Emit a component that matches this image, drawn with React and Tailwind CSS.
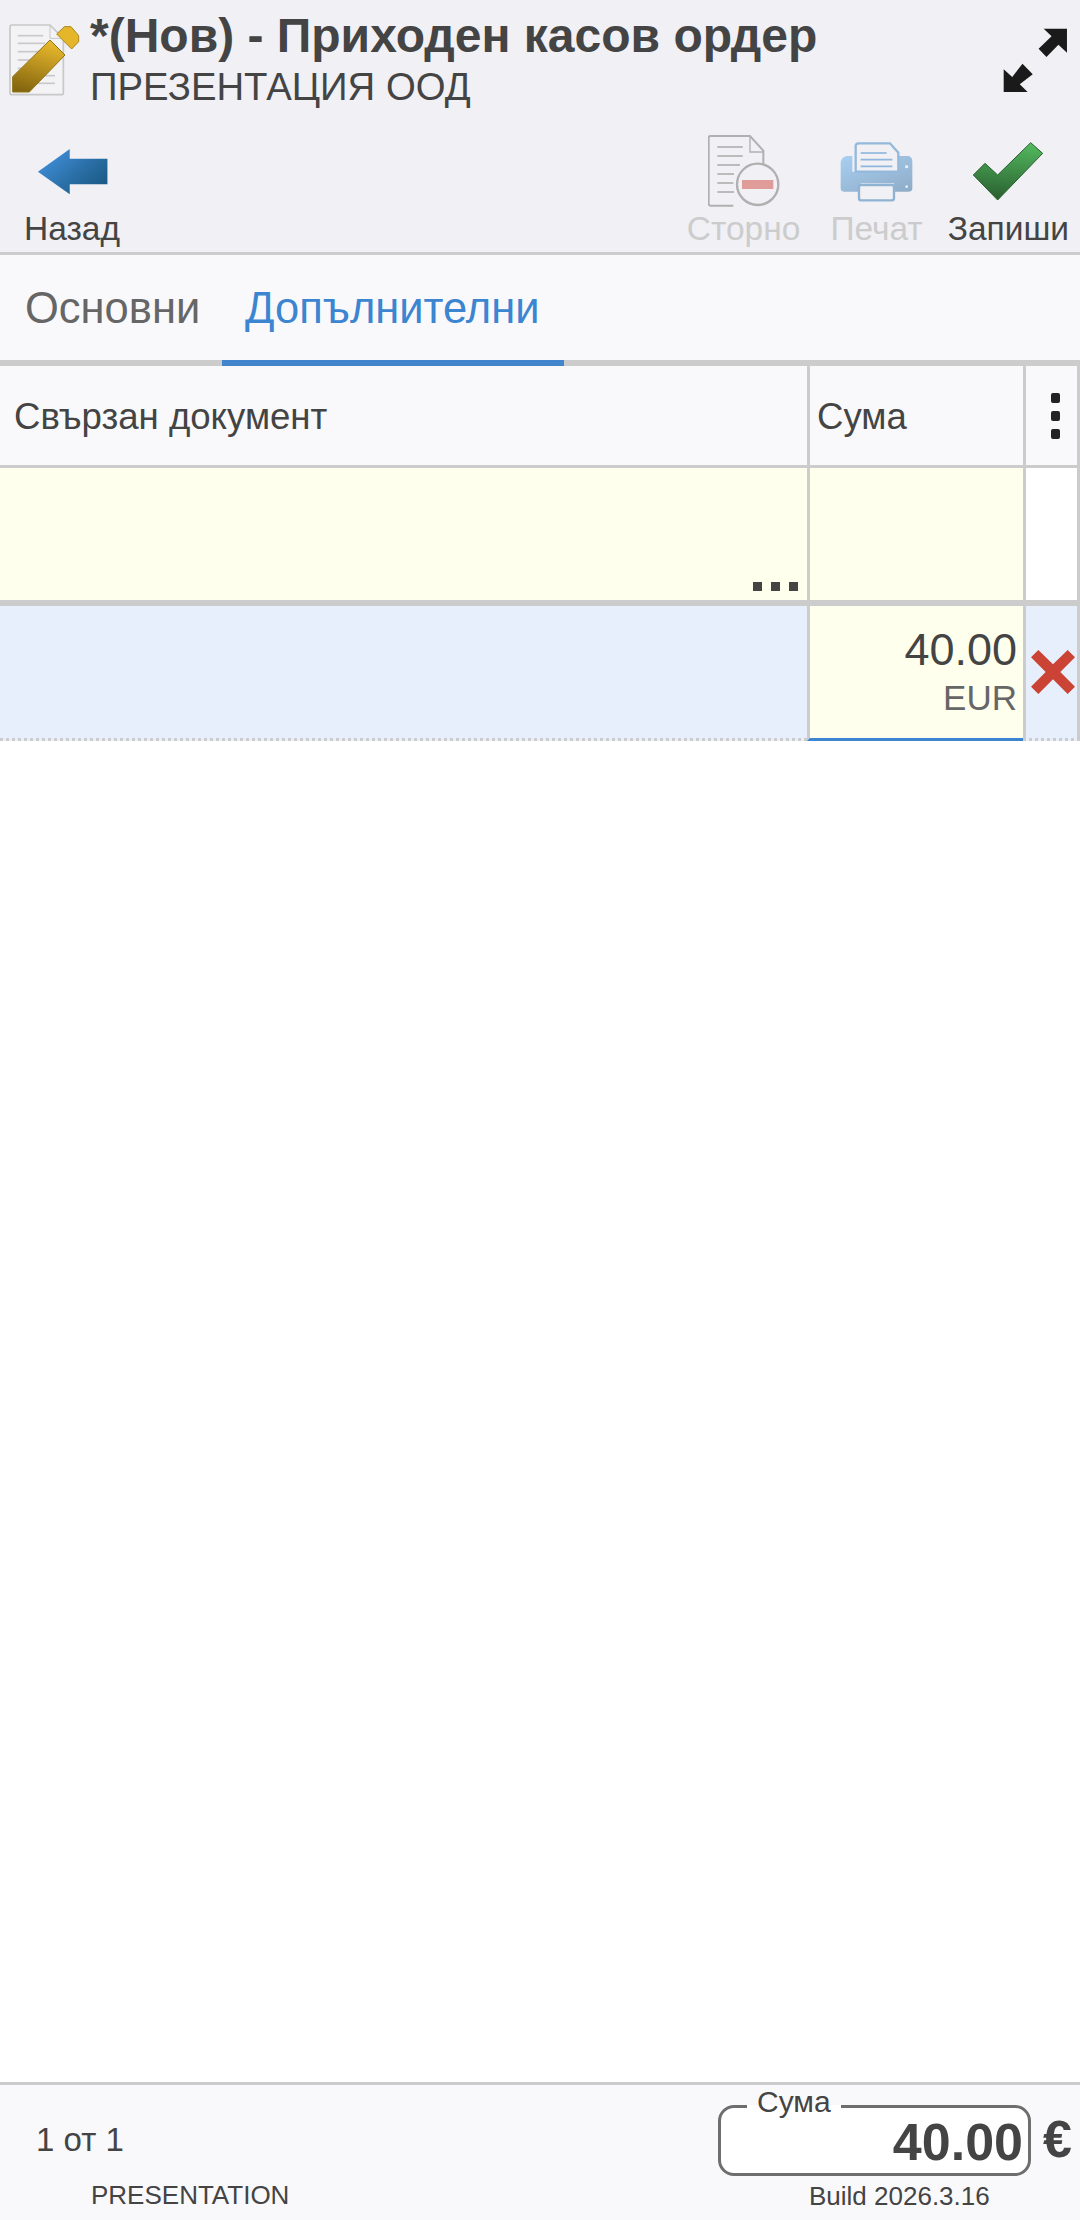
import React from "react";

const font = { fontFamily: '"Liberation Sans", Arial, sans-serif' };

function DocPencil() {
  return (
    <svg width="72" height="72" viewBox="27 72 216 216" className="shrink-0">
      <defs>
        <linearGradient id="pen" x1="0.6" y1="0" x2="0.3" y2="1">
          <stop offset="0" stopColor="#e9b92c" />
          <stop offset="1" stopColor="#85660f" />
        </linearGradient>
      </defs>
      <path d="M36 75 H150 L190 115 V278 Q190 284 184 284 H36 Q30 284 30 278 V81 Q30 75 36 75Z" fill="#f3f3f6" stroke="#c8c8c8" strokeWidth="5" />
      <path d="M150 75 V115 H190" fill="none" stroke="#c8c8c8" strokeWidth="3" />
      <g stroke="#c9c9c9" strokeWidth="5">
        <path d="M53 107 H130" /><path d="M53 130 H135" /><path d="M53 155 H135" /><path d="M53 180 H120" /><path d="M53 205 H100" /><path d="M110 227 H165" /><path d="M90 250 H165" />
      </g>
      <path d="M38 230 L150 120 L195 165 L88 276 H38Z" fill="url(#pen)" stroke="#8f7416" strokeWidth="3" />
      <path d="M170 102 L193 80 H213 L236 107 V125 L215 147Z" fill="#e5b52a" stroke="#a9871c" strokeWidth="3" />
    </svg>
  );
}

function Expand() {
  return (
    <svg width="65" height="65" viewBox="1343 83 190 195" preserveAspectRatio="none" className="shrink-0">
      <path d="M1462 85 H1530 V157 L1505 133 L1470 170 L1447 145 L1485 108Z" fill="#1a1a1a" />
      <path d="M1345 275 V207 L1370 230 L1400 190 L1430 222 L1392 252 L1415 275Z" fill="#1a1a1a" />
    </svg>
  );
}

function BackIcon() {
  return (
    <svg width="83" height="72" viewBox="90 405 240 216" preserveAspectRatio="none">
      <defs>
        <linearGradient id="back" x1="0.1" y1="0.2" x2="0.9" y2="0.8">
          <stop offset="0" stopColor="#3f8dd8" />
          <stop offset="0.55" stopColor="#2b70a8" />
          <stop offset="1" stopColor="#1b5c88" />
        </linearGradient>
      </defs>
      <path d="M110 515 L202 447 V476 H311 V553 H202 V583Z" fill="url(#back)" />
    </svg>
  );
}

function StornoIcon() {
  return (
    <svg width="72" height="72" viewBox="84 45 216 216">
      <path d="M92 48 H210 L250 92 V135 M160 257 H92 Q86 257 86 251 V54 Q86 48 92 48" fill="none" stroke="#b0b0b0" strokeWidth="6" />
      <path d="M210 48 V96 H250" fill="none" stroke="#b0b0b0" strokeWidth="4" />
      <g stroke="#b0b0b0" strokeWidth="5">
        <path d="M112 81 H188" /><path d="M112 108 H188" /><path d="M112 135 H180" /><path d="M112 162 H162" /><path d="M112 189 H160" /><path d="M112 216 H162" />
      </g>
      <circle cx="233" cy="193" r="62" fill="#f0f0f5" stroke="#b0b0b0" strokeWidth="7" />
      <rect x="186" y="180" width="94" height="27" fill="#e09c99" />
    </svg>
  );
}

function PrintIcon() {
  return (
    <svg width="74" height="72" viewBox="478 45 222 216">
      <defs>
        <linearGradient id="prn" x1="0.1" y1="0" x2="0.9" y2="1">
          <stop offset="0" stopColor="#a7cdf0" />
          <stop offset="1" stopColor="#8fadc8" />
        </linearGradient>
      </defs>
      <path d="M498 108 H515 V155 H655 V108 H680 Q695 108 695 125 V205 Q695 215 685 215 H640 V190 H540 V215 H490 Q480 215 480 205 V130 Q480 112 498 108Z" fill="url(#prn)" />
      <path d="M525 155 V78 Q525 70 533 70 H628 L653 98 V155Z" fill="#f0f0f5" stroke="#94b9da" strokeWidth="7" />
      <g stroke="#8fb6dc" strokeWidth="5">
        <path d="M540 99 H618" /><path d="M540 119 H635" /><path d="M540 139 H635" />
      </g>
      <rect x="535" y="195" width="105" height="46" rx="6" fill="#f0f0f5" stroke="#8fb3d2" strokeWidth="7" />
      <circle cx="678" cy="140" r="5" fill="#e4edf6" />
      <circle cx="678" cy="200" r="4" fill="#e4edf6" />
    </svg>
  );
}

function CheckIcon() {
  return (
    <svg width="72" height="72" viewBox="876 45 216 216">
      <defs>
        <linearGradient id="chk" x1="0.55" y1="0" x2="0.45" y2="1">
          <stop offset="0" stopColor="#52b85e" />
          <stop offset="1" stopColor="#2a5f30" />
        </linearGradient>
      </defs>
      <path d="M880 165 L915 130 L953 165 L1052 68 L1088 100 L953 240Z" fill="url(#chk)" stroke="#28602f" strokeWidth="3" strokeLinejoin="round" />
    </svg>
  );
}

function RedX() {
  return (
    <svg width="44" height="44" viewBox="0 0 132 132" className="shrink-0 ml-[3px]">
      <path d="M22 0 L66 43 L110 0 L132 22 L88 66 L132 110 L110 132 L66 88 L22 132 L0 110 L44 66 L0 22Z" fill="#cb4335" />
    </svg>
  );
}

function ToolButton({ label, disabled, children, className = "" }) {
  return (
    <div className={"flex flex-col items-center " + className}>
      {children}
      <span className={"text-[33.5px] leading-[44px] whitespace-nowrap " + (disabled ? "text-[#cccccc]" : "text-[#444444]")}>{label}</span>
    </div>
  );
}

export default function App() {
  return (
    <div className="flex flex-col w-[1080px] h-[2220px] bg-white overflow-hidden" style={font}>
      <header className="bg-[#f0f0f5] h-[255px] border-b-[3px] border-[#cccccc] shrink-0 flex flex-col">
        <div className="flex items-start h-[135px] pl-[9px] pr-[12px]">
          <div className="mt-[24px]"><DocPencil /></div>
          <div className="ml-[9px] text-[#444444]">
            <div className="text-[48px] font-bold leading-[54px] mt-[9px] whitespace-nowrap">*(Нов) - Приходен касов ордер</div>
            <div className="text-[38.3px] leading-[44px] mt-[2px] whitespace-nowrap">ПРЕЗЕНТАЦИЯ ООД</div>
          </div>
          <div className="ml-auto mt-[28px]"><Expand /></div>
        </div>
        <div className="flex items-start pl-[24px] pr-[11px]">
          <ToolButton label="Назад"><BackIcon /></ToolButton>
          <ToolButton label="Сторно" disabled className="ml-auto"><StornoIcon /></ToolButton>
          <ToolButton label="Печат" disabled className="ml-[30px]"><PrintIcon /></ToolButton>
          <ToolButton label="Запиши" className="ml-[25px]"><CheckIcon /></ToolButton>
        </div>
      </header>

      <nav className="flex h-[111px] bg-[#f9f9fb] border-b-[6px] border-[#cccccc] shrink-0 text-[43.5px]">
        <div className="flex items-center w-[222px] pl-[25px] h-[111px] text-[#666666] pb-[4px]">Основни</div>
        <div className="flex items-center w-[342px] pl-[23px] h-[111px] text-[#3c85d0] border-b-[6px] border-[#4285cc] pt-[2px] whitespace-nowrap">Допълнителни</div>
      </nav>

      <div className="flex h-[102px] bg-[#f9f9fb] border-b-[3px] border-[#cccccc] shrink-0 text-[36.6px] text-[#444444]">
        <div className="w-[807px] flex items-center pl-[14px] pt-[4px]">Свързан документ</div>
        <div className="w-[216px] flex items-center pl-[7px] pt-[4px] border-l-[3px] border-[#cccccc]">Сума</div>
        <div className="w-[57px] flex flex-col items-center justify-center gap-[8px] border-x-[3px] border-[#cccccc]">
          <span className="w-[9px] h-[10px] rounded-[2px] bg-[#222222] ml-[8px]" />
          <span className="w-[9px] h-[10px] rounded-[2px] bg-[#222222] ml-[8px]" />
          <span className="w-[9px] h-[10px] rounded-[2px] bg-[#222222] ml-[8px]" />
        </div>
      </div>

      <div className="flex h-[138px] border-b-[6px] border-[#cccccc] shrink-0">
        <div className="w-[807px] bg-[#ffffee] flex items-end justify-end gap-[9px] pr-[9px] pb-[9px]">
          <span className="w-[9px] h-[9px] bg-[#444444]" />
          <span className="w-[9px] h-[9px] bg-[#444444]" />
          <span className="w-[9px] h-[9px] bg-[#444444]" />
        </div>
        <div className="w-[216px] bg-[#ffffee] border-l-[3px] border-[#cccccc]" />
        <div className="w-[57px] bg-white border-x-[3px] border-[#cccccc]" />
      </div>

      <div className="flex h-[135px] shrink-0">
        <div className="w-[807px] bg-[#e7effc] border-b-[3px] border-dotted border-[#cccccc]" />
        <div className="w-[216px] bg-[#ffffee] border-l-[3px] border-[#cccccc] border-b-[3px] border-b-[#3c85d0] flex flex-col items-end pr-[6px] pt-[18px]">
          <span className="text-[45px] leading-[52px] text-[#444444]">40.00</span>
          <span className="text-[35px] leading-[40px] mt-[2px] text-[#666666]">EUR</span>
        </div>
        <div className="w-[57px] bg-[#e7effc] border-x-[3px] border-x-[#cccccc] border-b-[3px] border-b-[#cccccc] border-dotted flex items-center justify-center" style={{ borderLeftStyle: "solid", borderRightStyle: "solid" }}>
          <RedX />
        </div>
      </div>

      <div className="flex-1" />

      <footer className="h-[138px] shrink-0 bg-[#f9f9fb] border-t-[3px] border-[#cccccc] flex text-[#444444]">
        <div className="w-[718px] shrink-0 flex flex-col">
          <div className="pl-[36px] text-[33px] leading-[38px] mt-[36px]">1 от 1</div>
          <div className="pl-[91px] text-[26px] leading-[30px] mt-[21px]">PRESENTATION</div>
        </div>
        <div className="flex flex-col">
          <div className="flex items-start">
            <fieldset className="w-[313px] h-[75px] mt-[16px] border-[3px] border-[#6e6e6e] rounded-[16px] bg-white flex justify-end items-center pr-[5px] relative">
              <legend className="ml-[26px] px-[10px] text-[30px] leading-[10px]"><span className="relative top-[-4px]">Сума</span></legend>
              <span className="text-[52px] font-bold leading-[56px] text-[#444444]">40.00</span>
            </fieldset>
            <span className="ml-[12px] mt-[26px] text-[52px] font-bold leading-[56px]">€</span>
          </div>
          <div className="text-[26px] leading-[30px] w-[360px] pl-[91px] mt-[5px] whitespace-nowrap">Build 2026.3.16</div>
        </div>
      </footer>
    </div>
  );
}
